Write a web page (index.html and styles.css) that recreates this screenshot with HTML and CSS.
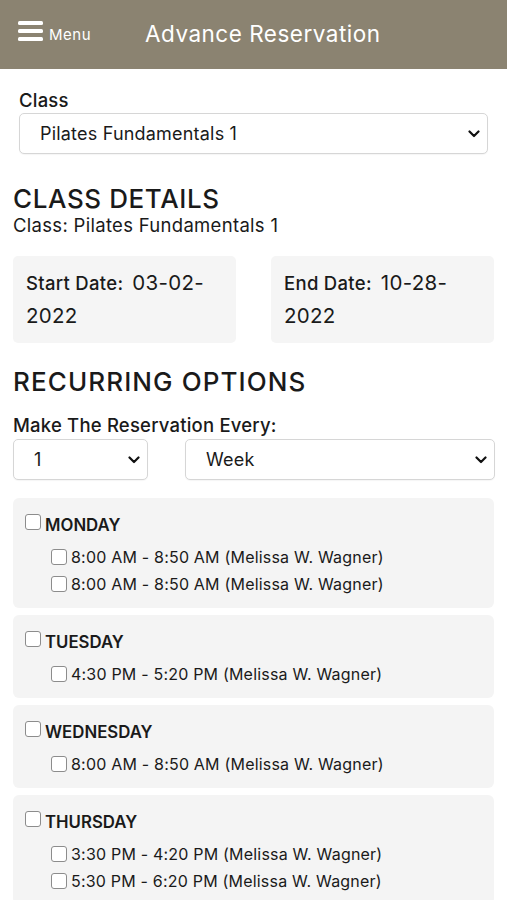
FILE: index.html
```html
<!DOCTYPE html>
<html lang="en">
<head>
    <meta charset="UTF-8">
    <meta name="viewport" content="width=device-width, initial-scale=1.0">
    <title>Advance Reservation</title>
    <link rel="stylesheet" href="styles.css">
</head>
<body>
    <header class="top-bar">
        <div class="menu-btn">
            <svg class="menu-icon" width="25" height="21" viewBox="0 0 25 21">
                <rect x="0" y="0" width="25" height="4" rx="1.5" fill="#fff"/>
                <rect x="0" y="8" width="25" height="4" rx="1.5" fill="#fff"/>
                <rect x="0" y="16" width="25" height="4" rx="1.5" fill="#fff"/>
            </svg>
            <span>Menu</span>
        </div>
        <h1 class="page-title">Advance Reservation</h1>
    </header>

    <main class="content">
        <div class="class-field">
            <label class="field-label">Class</label>
            <div class="select-wrap">
                <select class="select">
                    <option>Pilates Fundamentals 1</option>
                </select>
                <svg class="chevron" width="12" height="8" viewBox="0 0 12 8"><path d="M1.5 1.5 L6 6 L10.5 1.5" fill="none" stroke="#111" stroke-width="2.2" stroke-linecap="round" stroke-linejoin="round"/></svg>
            </div>
        </div>

        <h2 class="section-title">CLASS DETAILS</h2>
        <div class="class-name">Class: Pilates Fundamentals 1</div>

        <div class="dates">
            <div class="date-box">
                <span class="date-label">Start Date:</span>&nbsp; <span class="date-value">03-02-</span><span class="date-value">2022</span>
            </div>
            <div class="date-box">
                <span class="date-label">End Date:</span>&nbsp; <span class="date-value">10-28-</span><span class="date-value">2022</span>
            </div>
        </div>

        <h2 class="section-title recurring">RECURRING OPTIONS</h2>
        <div class="field-label every">Make The Reservation Every:</div>
        <div class="every-row">
            <div class="select-wrap small">
                <select class="select">
                    <option>1</option>
                </select>
                <svg class="chevron" width="12" height="8" viewBox="0 0 12 8"><path d="M1.5 1.5 L6 6 L10.5 1.5" fill="none" stroke="#111" stroke-width="2.2" stroke-linecap="round" stroke-linejoin="round"/></svg>
            </div>
            <div class="select-wrap wide">
                <select class="select">
                    <option>Week</option>
                </select>
                <svg class="chevron" width="12" height="8" viewBox="0 0 12 8"><path d="M1.5 1.5 L6 6 L10.5 1.5" fill="none" stroke="#111" stroke-width="2.2" stroke-linecap="round" stroke-linejoin="round"/></svg>
            </div>
        </div>

        <div class="days">
            <div class="day-card">
                <label class="day-name"><input type="checkbox" class="check">MONDAY</label>
                <label class="slot"><input type="checkbox" class="check">8:00 AM - 8:50 AM (Melissa W. Wagner)</label>
                <label class="slot"><input type="checkbox" class="check">8:00 AM - 8:50 AM (Melissa W. Wagner)</label>
            </div>
            <div class="day-card">
                <label class="day-name"><input type="checkbox" class="check">TUESDAY</label>
                <label class="slot"><input type="checkbox" class="check">4:30 PM - 5:20 PM (Melissa W. Wagner)</label>
            </div>
            <div class="day-card">
                <label class="day-name"><input type="checkbox" class="check">WEDNESDAY</label>
                <label class="slot"><input type="checkbox" class="check">8:00 AM - 8:50 AM (Melissa W. Wagner)</label>
            </div>
            <div class="day-card">
                <label class="day-name"><input type="checkbox" class="check">THURSDAY</label>
                <label class="slot"><input type="checkbox" class="check">3:30 PM - 4:20 PM (Melissa W. Wagner)</label>
                <label class="slot"><input type="checkbox" class="check">5:30 PM - 6:20 PM (Melissa W. Wagner)</label>
            </div>
        </div>
    </main>
</body>
</html>
```

FILE: styles.css
```css
body {
    margin: 0;
    font-family: Inter, "DejaVu Sans", sans-serif;
    color: #1a1a1a;
    background-color: #ffffff;
}

.top-bar {
    height: 69px;
    background-color: #8b8371;
    display: flex;
    align-items: center;
    padding: 0 18px;
    color: #ffffff;
}

.menu-btn {
    display: flex;
    align-items: flex-end;
    gap: 6px;
    width: 127px;
    margin-top: -6px;
}

.menu-icon {
    display: block;
}

.menu-btn span {
    font-size: 15px;
    line-height: 15px;
    letter-spacing: 0.5px;
}

.page-title {
    margin: 0 0 3px 0;
    font-size: 22.5px;
    font-weight: 400;
    letter-spacing: 0.5px;
}

.content {
    padding: 0 13px;
}

.class-field {
    padding: 20px 6px 0 6px;
}

.field-label {
    display: block;
    font-size: 18.5px;
    font-weight: 500;
    line-height: 22px;
    margin-bottom: 2px;
    letter-spacing: 0.2px;
}

.select-wrap {
    position: relative;
}

.select {
    display: block;
    width: 100%;
    height: 41px;
    padding: 0 20px;
    border: 1px solid #d6d6d6;
    border-radius: 5px;
    background-color: #ffffff;
    font-family: inherit;
    font-size: 18px;
    letter-spacing: 0.2px;
    color: #1a1a1a;
    appearance: none;
    -webkit-appearance: none;
    box-shadow: 0 1px 1px rgba(0, 0, 0, 0.04);
}

.chevron {
    position: absolute;
    right: 8px;
    top: 17px;
}

.section-title {
    margin: 31px 0 0 0;
    font-size: 26px;
    font-weight: 500;
    line-height: 28px;
    letter-spacing: 0.6px;
}

.class-name {
    font-size: 18.5px;
    line-height: 24px;
    letter-spacing: 0.3px;
}

.dates {
    display: flex;
    justify-content: space-between;
    margin-top: 19px;
}

.date-box {
    width: 197px;
    background-color: #f5f5f5;
    border-radius: 5px;
    padding: 11px 13px 10px 13px;
    line-height: 31px;
}

.date-label {
    font-size: 18.5px;
    font-weight: 500;
    letter-spacing: 0.3px;
}

.date-value {
    font-size: 20.5px;
    letter-spacing: 0.3px;
}

.recurring {
    margin-top: 25px;
    letter-spacing: 1.1px;
}

.every {
    margin-top: 18px;
    margin-bottom: 3px;
}

.every-row {
    display: flex;
    gap: 37px;
}

.small {
    width: 135px;
}

.wide {
    flex: 1;
    margin-right: -1px;
}

.days {
    display: flex;
    flex-direction: column;
    gap: 7px;
    margin-top: 18px;
}

.day-card {
    background-color: #f4f4f4;
    border-radius: 6px;
    padding: 16px 12px 10px 12px;
    display: flex;
    flex-direction: column;
}

.check {
    appearance: none;
    -webkit-appearance: none;
    width: 16px;
    height: 16px;
    margin: 0 4px 0 0;
    border: 1px solid #8c8c8c;
    border-radius: 3px;
    background-color: #ffffff;
    vertical-align: -2px;
}

.day-name {
    font-size: 16.8px;
    font-weight: 600;
    line-height: 22px;
    margin-bottom: 8px;
}

.day-name .check {
    vertical-align: 1px;
    margin-right: 4px;
}

.slot {
    font-size: 16px;
    line-height: 27px;
    padding-left: 26px;
    letter-spacing: 0.2px;
}
```
